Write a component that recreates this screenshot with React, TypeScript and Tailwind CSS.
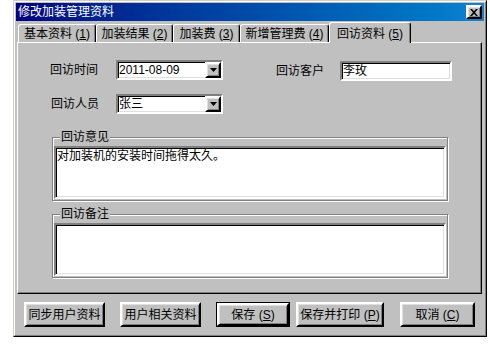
import React from "react";

const sunken =
  "border-2 border-t-[#808080] border-l-[#808080] border-b-white border-r-white shadow-[inset_1px_1px_0_#000,inset_-1px_-1px_0_#dfdfdf]";
const raised =
  "border-2 border-t-white border-l-white border-b-black border-r-black shadow-[inset_1px_1px_0_#dfdfdf,inset_-1px_-1px_0_#808080]";

function Tab({ w, children }: { w: string; children: React.ReactNode }) {
  return (
    <div
      className={`${w} h-[18px] flex items-center justify-center border-t border-l border-r border-t-white border-l-white border-r-black rounded-t-[3px] shadow-[inset_-1px_0_0_#808080] whitespace-nowrap`}
    >
      {children}
    </div>
  );
}

function Combo({ value }: { value: string }) {
  return (
    <div className={`w-[107px] h-[20px] bg-white ${sunken} flex items-center`}>
      <span className="flex-1 pl-[1px] leading-[12px] whitespace-nowrap">{value}</span>
      <div className={`w-[16px] h-[16px] bg-[#c0c0c0] ${raised} flex items-center justify-center`}>
        <svg width="7" height="4" viewBox="0 0 7 4">
          <path d="M0 0H7L3.5 4Z" fill="#000" />
        </svg>
      </div>
    </div>
  );
}

function Group({ label, text, mt }: { label: string; text?: string; mt: string }) {
  return (
    <div
      className={`relative ${mt} ml-[34px] w-[396px] h-[64px] border border-[#808080] shadow-[1px_1px_0_#fff,inset_1px_1px_0_#fff] pt-[8px] px-[1px] pb-[1px] flex`}
    >
      <span className="absolute left-[7px] top-[-8px] bg-[#c0c0c0] px-[1px] leading-[14px]">
        {label}
      </span>
      <div className={`flex-1 bg-white ${sunken} px-[1px] pt-[1px] leading-[14px]`}>{text}</div>
    </div>
  );
}

function Btn({
  w,
  ml,
  children,
  def,
}: {
  w: string;
  ml: string;
  children: React.ReactNode;
  def?: boolean;
}) {
  if (def) {
    return (
      <div className={`${w} ${ml} h-[25px] border border-black flex`}>
        <div className={`flex-1 bg-[#c0c0c0] ${raised} flex items-center justify-center whitespace-nowrap`}>
          {children}
        </div>
      </div>
    );
  }
  return (
    <div className={`${w} ${ml} h-[25px] bg-[#c0c0c0] ${raised} flex items-center justify-center whitespace-nowrap`}>
      {children}
    </div>
  );
}

export default function App() {
  return (
    <div className="w-[490px] h-[347px] bg-white overflow-hidden font-['Liberation_Sans','Noto_Sans_CJK_SC',sans-serif] text-[12px] text-black">
      {/* window */}
      <div className="ml-[13px] w-[474px] h-[337px] border border-t-[#d4d0c8] border-l-[#d4d0c8] border-b-black border-r-black">
        <div className="w-full h-full border border-t-white border-l-white border-b-[#808080] border-r-[#808080] bg-[#c0c0c0] p-[1px] flex flex-col">
          {/* title bar */}
          <div className="h-[18px] bg-gradient-to-r from-[#000080] to-[#1084d0] flex items-center pl-[2px] pr-[2px]">
            <span className="flex-1 text-white leading-[14px] whitespace-nowrap">修改加装管理资料</span>
            <div className={`w-[16px] h-[14px] bg-[#c0c0c0] ${raised} flex items-center justify-center`}>
              <svg width="8" height="7" viewBox="0 0 8 7">
                <path d="M0 0H2L4 2.3L6 0H8L5 3.5L8 7H6L4 4.7L2 7H0L3 3.5Z" fill="#000" />
              </svg>
            </div>
          </div>

          {/* tabs */}
          <div className="ml-[1px] w-[465px] flex flex-col">
            <div className="h-[21px] flex items-end pl-[1px]">
              <Tab w="w-[78px]">
                基本资料 (<u>1</u>)
              </Tab>
              <Tab w="w-[77px]">
                加装结果 (<u>2</u>)
              </Tab>
              <Tab w="w-[67px]">
                加装费 (<u>3</u>)
              </Tab>
              <Tab w="w-[89px]">
                新增管理费 (<u>4</u>)
              </Tab>
              <div className="w-[82px] h-[21px] -mb-[1px] relative z-10 bg-[#c0c0c0] flex items-start justify-center pt-[2px] border-t border-l border-r border-t-white border-l-white border-r-black rounded-t-[3px] shadow-[inset_-1px_0_0_#808080] whitespace-nowrap">
                回访资料 (<u>5</u>)
              </div>
            </div>

            {/* panel */}
            <div className="h-[252px] border border-t-white border-l-white border-b-black border-r-black shadow-[inset_-1px_-1px_0_#808080] pt-[17px] flex flex-col">
              <div className="flex items-start pl-[32px]">
                <div className="w-[66px] h-[20px] flex items-center">回访时间</div>
                <Combo value="2011-08-09" />
                <div className="ml-[53px] w-[64px] h-[20px] mt-[1px] flex items-center">回访客户</div>
                <div className={`mt-[1px] w-[112px] h-[20px] bg-white ${sunken} flex items-center pl-[1px]`}>
                  李玫
                </div>
              </div>
              <div className="flex items-start pl-[33px] mt-[13px]">
                <div className="w-[65px] h-[20px] flex items-center">回访人员</div>
                <Combo value="张三" />
              </div>

              <Group mt="mt-[23px]" label="回访意见" text="对加装机的安装时间拖得太久。" />
              <Group mt="mt-[13px]" label="回访备注" />
            </div>
          </div>

          {/* buttons */}
          <div className="flex items-start mt-[8px] pl-[8px]">
            <Btn w="w-[81px]" ml="ml-0">同步用户资料</Btn>
            <Btn w="w-[81px]" ml="ml-[15px]">用户相关资料</Btn>
            <Btn w="w-[74px]" ml="ml-[15px]" def>
              保存 (<u>S</u>)
            </Btn>
            <Btn w="w-[88px]" ml="ml-[6px]">
              保存并打印 (<u>P</u>)
            </Btn>
            <Btn w="w-[75px]" ml="ml-[16px]">
              取消 (<u>C</u>)
            </Btn>
          </div>
        </div>
      </div>
    </div>
  );
}
